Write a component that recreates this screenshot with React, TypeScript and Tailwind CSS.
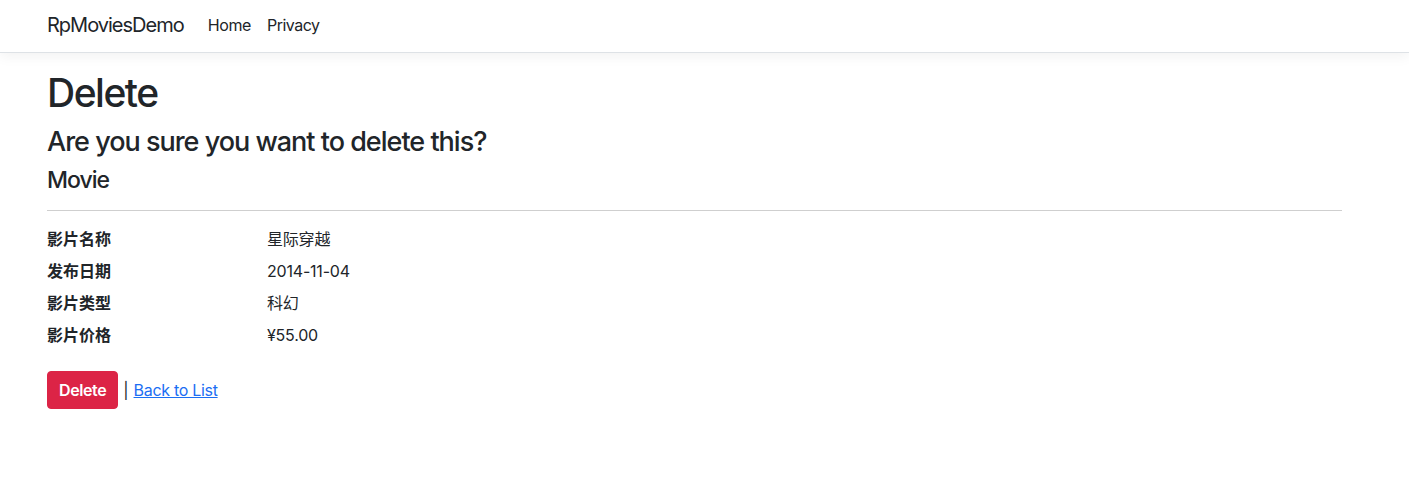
export default function App() {
  const font = { fontFamily: 'Inter, "Noto Sans CJK SC", sans-serif' };
  const rows: [string, string][] = [
    ['影片名称', '星际穿越'],
    ['发布日期', '2014-11-04'],
    ['影片类型', '科幻'],
    ['影片价格', '¥55.00'],
  ];

  return (
    <div className="min-h-screen bg-white text-[#212529] text-base leading-6" style={font}>
      {/* Navbar */}
      <header className="h-[53px] border-b border-[#dee2e6] bg-white shadow-[0_4px_12px_rgba(0,0,0,0.05)]">
        <div className="flex h-[49px] items-center pl-[47px]">
          <span className="mr-4 text-[20px] leading-[30px] text-[#212529] tracking-[-1px]">RpMoviesDemo</span>
          <nav className="flex">
            <a className="px-2 text-[#212529] tracking-[-0.4px]">Home</a>
            <a className="px-2 text-[#212529] tracking-[-0.5px]">Privacy</a>
          </nav>
        </div>
      </header>

      <main className="w-[1295px] ml-[47px] pt-4">
        <h1 className="text-[39px] leading-[48px] mb-2 font-medium tracking-[-1.5px]">Delete</h1>
        <h3 className="text-[27px] leading-[33px] mb-2 font-medium tracking-[-1px]">
          Are you sure you want to delete this?
        </h3>
        <div>
          <h4 className="text-[23px] leading-[28px] font-medium tracking-[-1px]">Movie</h4>
          <hr className="mt-4 mb-4 border-t border-[#cfcfcf]" />
          <dl className="grid grid-cols-[220px_1fr] mb-4">
            {rows.map(([k, v]) => (
              <div key={k} className="contents">
                <dt className="font-semibold mb-2">{k}</dt>
                <dd className="mb-2 tracking-[-0.2px]">{v}</dd>
              </div>
            ))}
          </dl>
          <form className="flex items-center">
            <button
              type="button"
              className="h-[38px] px-[11px] rounded bg-[#dc2446] text-white font-semibold border border-[#dc2446] tracking-[-0.4px]"
            >
              Delete
            </button>
            <span className="ml-[5px] mr-[5px] text-[#212529]">|</span>
            <a href="#" className="text-[#1b6ef3] underline tracking-[-0.3px]">Back to List</a>
          </form>
        </div>
      </main>
    </div>
  );
}
